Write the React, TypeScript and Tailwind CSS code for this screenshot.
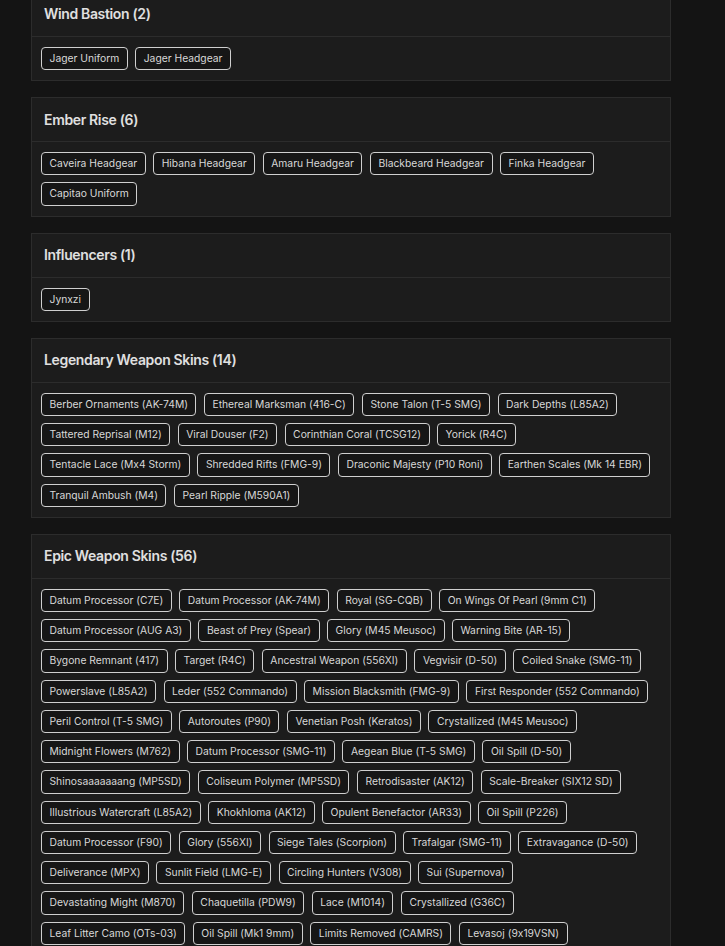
const sections: { title: string; items: string[] }[] = [
  { title: "Wind Bastion", items: ["Jager Uniform", "Jager Headgear"] },
  {
    title: "Ember Rise",
    items: [
      "Caveira Headgear",
      "Hibana Headgear",
      "Amaru Headgear",
      "Blackbeard Headgear",
      "Finka Headgear",
      "Capitao Uniform",
    ],
  },
  { title: "Influencers", items: ["Jynxzi"] },
  {
    title: "Legendary Weapon Skins",
    items: [
      "Berber Ornaments (AK-74M)",
      "Ethereal Marksman (416-C)",
      "Stone Talon (T-5 SMG)",
      "Dark Depths (L85A2)",
      "Tattered Reprisal (M12)",
      "Viral Douser (F2)",
      "Corinthian Coral (TCSG12)",
      "Yorick (R4C)",
      "Tentacle Lace (Mx4 Storm)",
      "Shredded Rifts (FMG-9)",
      "Draconic Majesty (P10 Roni)",
      "Earthen Scales (Mk 14 EBR)",
      "Tranquil Ambush (M4)",
      "Pearl Ripple (M590A1)",
    ],
  },
  {
    title: "Epic Weapon Skins",
    items: [
      "Datum Processor (C7E)",
      "Datum Processor (AK-74M)",
      "Royal (SG-CQB)",
      "On Wings Of Pearl (9mm C1)",
      "Datum Processor (AUG A3)",
      "Beast of Prey (Spear)",
      "Glory (M45 Meusoc)",
      "Warning Bite (AR-15)",
      "Bygone Remnant (417)",
      "Target (R4C)",
      "Ancestral Weapon (556XI)",
      "Vegvisir (D-50)",
      "Coiled Snake (SMG-11)",
      "Powerslave (L85A2)",
      "Leder (552 Commando)",
      "Mission Blacksmith (FMG-9)",
      "First Responder (552 Commando)",
      "Peril Control (T-5 SMG)",
      "Autoroutes (P90)",
      "Venetian Posh (Keratos)",
      "Crystallized (M45 Meusoc)",
      "Midnight Flowers (M762)",
      "Datum Processor (SMG-11)",
      "Aegean Blue (T-5 SMG)",
      "Oil Spill (D-50)",
      "Shinosaaaaaaang (MP5SD)",
      "Coliseum Polymer (MP5SD)",
      "Retrodisaster (AK12)",
      "Scale-Breaker (SIX12 SD)",
      "Illustrious Watercraft (L85A2)",
      "Khokhloma (AK12)",
      "Opulent Benefactor (AR33)",
      "Oil Spill (P226)",
      "Datum Processor (F90)",
      "Glory (556XI)",
      "Siege Tales (Scorpion)",
      "Trafalgar (SMG-11)",
      "Extravagance (D-50)",
      "Deliverance (MPX)",
      "Sunlit Field (LMG-E)",
      "Circling Hunters (V308)",
      "Sui (Supernova)",
      "Devastating Might (M870)",
      "Chaquetilla (PDW9)",
      "Lace (M1014)",
      "Crystallized (G36C)",
      "Leaf Litter Camo (OTs-03)",
      "Oil Spill (Mk1 9mm)",
      "Limits Removed (CAMRS)",
      "Levasoj (9x19VSN)",
      "Datum Processor (P12)",
      "Oil Spill (Super 90)",
      "Glory (ITA12L)",
      "Crystallized (SPAS-12)",
      "Datum Processor (Vector .45 ACP)",
      "Siege Tales (MP7)",
    ],
  },
];

function Section({ title, items }: { title: string; items: string[] }) {
  return (
    <div className="w-[640px] border border-[#2c2c2c] bg-[#1c1c1c]">
      <div className="border-b border-[#2c2c2c] px-3 py-[11.5px] text-[14px] leading-5 font-semibold tracking-[-0.35px] text-[#e0e0e0]">
        {title} ({items.length})
      </div>
      <div className="flex flex-wrap gap-x-[7.5px] gap-y-[7px] px-[9px] py-[10px]">
        {items.map((it) => (
          <button
            key={it}
            className="rounded-[4px] border border-[#cfcfcf] bg-[#161616] px-[7.5px] py-[3px] text-[10.3px] leading-[15.25px] font-normal text-[#d8d8d8]"
          >
            {it}
          </button>
        ))}
      </div>
    </div>
  );
}

export default function App() {
  return (
    <div className="min-h-screen bg-[#141414] font-['Inter',sans-serif] [font-feature-settings:'calt'_0]">
      <div className="-mt-[8.25px] flex flex-col gap-4 pb-8 pl-[31px]">
        {sections.map((s) => (
          <Section key={s.title} {...s} />
        ))}
      </div>
    </div>
  );
}
